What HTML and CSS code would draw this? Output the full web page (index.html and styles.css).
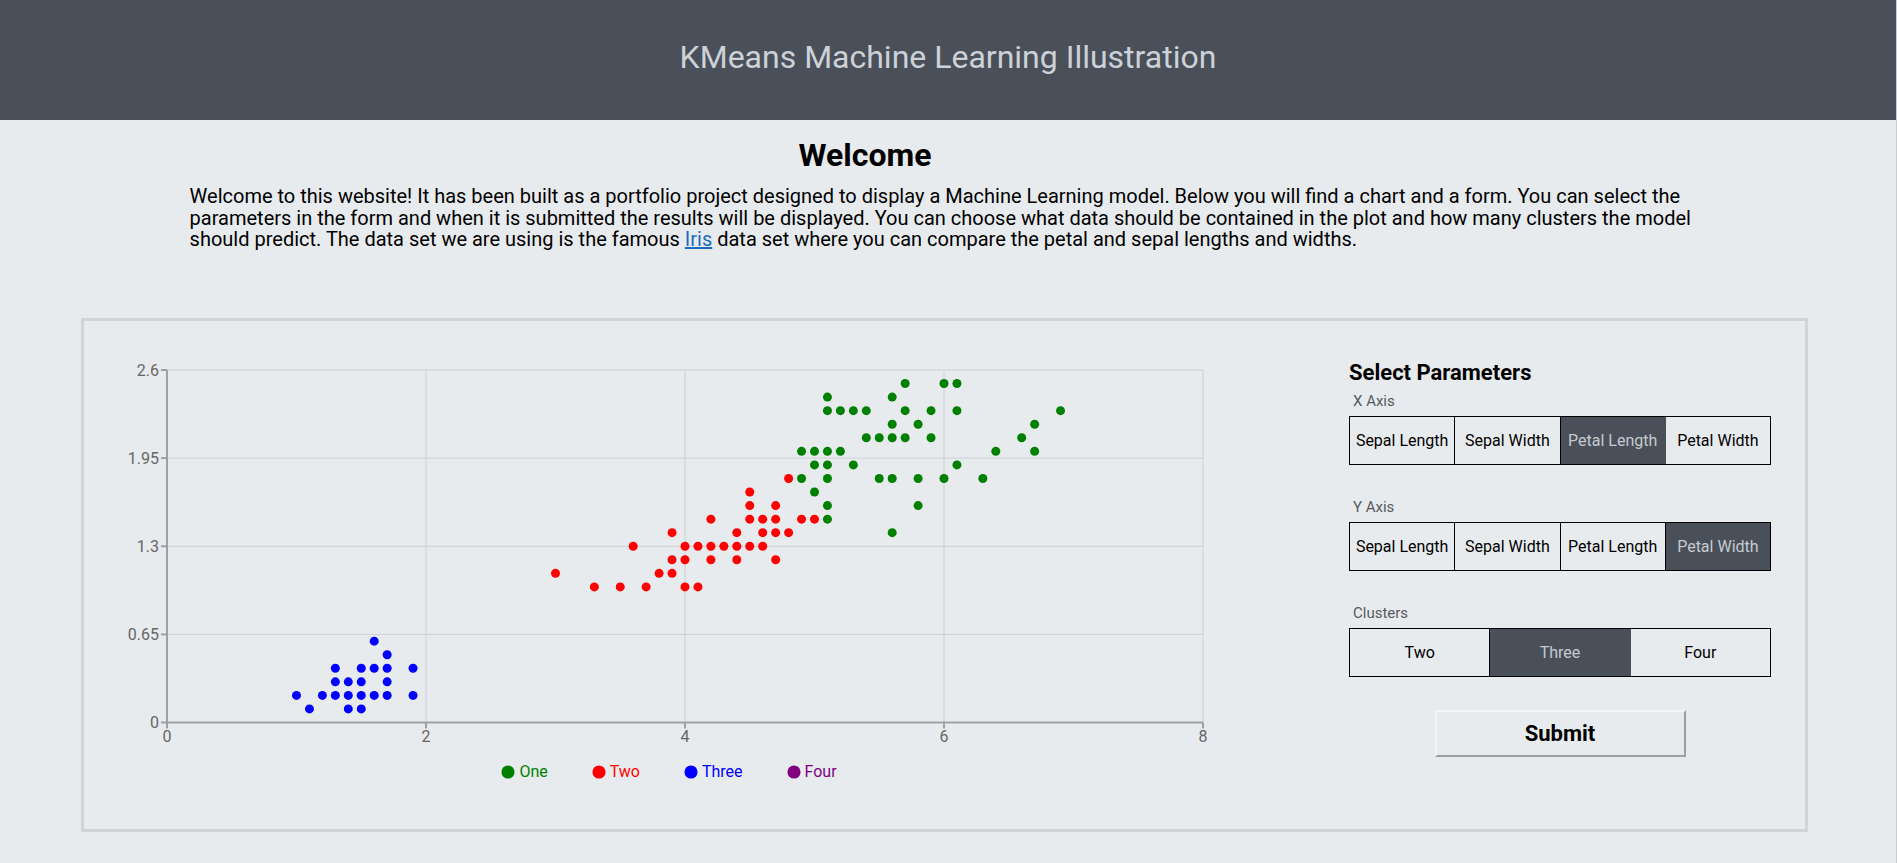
FILE: index.html
```html
<!DOCTYPE html>
<html lang="en">
<head>
<meta charset="utf-8">
<title>KMeans Machine Learning Illustration</title>
<link rel="stylesheet" href="styles.css">
</head>
<body>
<header class="topbar">
  <div class="title">KMeans Machine Learning Illustration</div>
</header>
<section class="intro">
  <h1 class="welcome">Welcome</h1>
  <p class="lead">Welcome to this website! It has been built as a portfolio project designed to display a Machine Learning model. Below you will find a chart and a form. You can select the parameters in the form and when it is submitted the results will be displayed. You can choose what data should be contained in the plot and how many clusters the model should predict. The data set we are using is the famous <a href="#" class="link">Iris</a> data set where you can compare the petal and sepal lengths and widths.</p>
</section>
<main class="panel">
  <div class="chart-col">
    <svg class="chart" width="1170" height="441" viewBox="0 0 1170 441">
      <g class="grid">
        <line x1="83" y1="49" x2="1119" y2="49"/>
        <line x1="83" y1="137.1" x2="1119" y2="137.1"/>
        <line x1="83" y1="225.25" x2="1119" y2="225.25"/>
        <line x1="83" y1="313.4" x2="1119" y2="313.4"/>
        <line x1="342" y1="49" x2="342" y2="401.5"/>
        <line x1="601" y1="49" x2="601" y2="401.5"/>
        <line x1="860" y1="49" x2="860" y2="401.5"/>
        <line x1="1119" y1="49" x2="1119" y2="401.5"/>
      </g>
      <g class="axis">
        <line x1="83" y1="49" x2="83" y2="402.5"/>
        <line x1="82" y1="401.5" x2="1119" y2="401.5"/>
        <line x1="77" y1="49" x2="83" y2="49"/>
        <line x1="77" y1="137.1" x2="83" y2="137.1"/>
        <line x1="77" y1="225.25" x2="83" y2="225.25"/>
        <line x1="77" y1="313.4" x2="83" y2="313.4"/>
        <line x1="77" y1="401.5" x2="83" y2="401.5"/>
        <line x1="83" y1="401.5" x2="83" y2="407.5"/>
        <line x1="342" y1="401.5" x2="342" y2="407.5"/>
        <line x1="601" y1="401.5" x2="601" y2="407.5"/>
        <line x1="860" y1="401.5" x2="860" y2="407.5"/>
        <line x1="1119" y1="401.5" x2="1119" y2="407.5"/>
      </g>
      <g class="tick-y">
        <text x="75" y="54.7">2.6</text>
        <text x="75" y="142.8">1.95</text>
        <text x="75" y="230.9">1.3</text>
        <text x="75" y="319.1">0.65</text>
        <text x="75" y="407.2">0</text>
      </g>
      <g class="tick-x">
        <text x="83" y="420.5">0</text>
        <text x="342" y="420.5">2</text>
        <text x="601" y="420.5">4</text>
        <text x="860" y="420.5">6</text>
        <text x="1119" y="420.5">8</text>
      </g>
      <g class="dots one">
        <circle cx="860" cy="62.55"/><circle cx="743.45" cy="143.9"/><circle cx="847.05" cy="116.78"/>
        <circle cx="808.2" cy="157.46"/><circle cx="834.1" cy="103.22"/><circle cx="937.7" cy="116.78"/>
        <circle cx="898.85" cy="157.46"/><circle cx="834.1" cy="157.46"/><circle cx="872.95" cy="62.55"/>
        <circle cx="743.45" cy="130.34"/><circle cx="769.35" cy="143.9"/><circle cx="795.25" cy="116.78"/>
        <circle cx="730.5" cy="130.34"/><circle cx="743.45" cy="76.11"/><circle cx="769.35" cy="89.67"/>
        <circle cx="795.25" cy="157.46"/><circle cx="950.65" cy="103.22"/><circle cx="976.55" cy="89.67"/>
        <circle cx="821.15" cy="89.67"/><circle cx="717.55" cy="130.34"/><circle cx="950.65" cy="130.34"/>
        <circle cx="717.55" cy="157.46"/><circle cx="821.15" cy="116.78"/><circle cx="860" cy="157.46"/>
        <circle cx="808.2" cy="116.78"/><circle cx="834.1" cy="184.57"/><circle cx="872.95" cy="143.9"/>
        <circle cx="911.8" cy="130.34"/><circle cx="808.2" cy="103.22"/><circle cx="743.45" cy="198.13"/>
        <circle cx="808.2" cy="211.69"/><circle cx="872.95" cy="89.67"/><circle cx="808.2" cy="76.11"/>
        <circle cx="782.3" cy="116.78"/><circle cx="847.05" cy="89.67"/><circle cx="821.15" cy="62.55"/>
        <circle cx="756.4" cy="89.67"/><circle cx="730.5" cy="143.9"/><circle cx="756.4" cy="130.34"/>
        <circle cx="782.3" cy="89.67"/><circle cx="743.45" cy="89.67"/><circle cx="743.45" cy="157.46"/>
        <circle cx="730.5" cy="171.01"/><circle cx="743.45" cy="184.57"/>
      </g>
      <g class="dots two">
        <circle cx="691.65" cy="211.69"/><circle cx="665.75" cy="198.13"/><circle cx="717.55" cy="198.13"/>
        <circle cx="601" cy="225.25"/><circle cx="678.7" cy="198.13"/><circle cx="665.75" cy="225.25"/>
        <circle cx="691.65" cy="184.57"/><circle cx="510.35" cy="265.92"/><circle cx="678.7" cy="225.25"/>
        <circle cx="588.05" cy="211.69"/><circle cx="536.25" cy="265.92"/><circle cx="626.9" cy="198.13"/>
        <circle cx="601" cy="265.92"/><circle cx="549.2" cy="225.25"/><circle cx="652.8" cy="211.69"/>
        <circle cx="613.95" cy="265.92"/><circle cx="588.05" cy="252.36"/><circle cx="704.6" cy="157.46"/>
        <circle cx="691.65" cy="238.8"/><circle cx="639.85" cy="225.25"/><circle cx="704.6" cy="211.69"/>
        <circle cx="575.1" cy="252.36"/><circle cx="562.15" cy="265.92"/><circle cx="588.05" cy="238.8"/>
        <circle cx="665.75" cy="184.57"/><circle cx="691.65" cy="198.13"/><circle cx="652.8" cy="225.25"/>
        <circle cx="613.95" cy="225.25"/><circle cx="652.8" cy="238.8"/><circle cx="678.7" cy="211.69"/>
        <circle cx="601" cy="238.8"/><circle cx="626.9" cy="225.25"/><circle cx="626.9" cy="238.8"/>
        <circle cx="471.5" cy="252.36"/><circle cx="665.75" cy="171.01"/><circle cx="730.5" cy="198.13"/>
      </g>
      <g class="dots three">
        <circle cx="212.5" cy="374.38"/><circle cx="225.45" cy="387.94"/><circle cx="238.4" cy="374.38"/>
        <circle cx="251.35" cy="374.38"/><circle cx="251.35" cy="360.83"/><circle cx="251.35" cy="347.27"/>
        <circle cx="264.3" cy="387.94"/><circle cx="264.3" cy="374.38"/><circle cx="264.3" cy="360.83"/>
        <circle cx="277.25" cy="387.94"/><circle cx="277.25" cy="374.38"/><circle cx="277.25" cy="360.83"/>
        <circle cx="277.25" cy="347.27"/><circle cx="290.2" cy="374.38"/><circle cx="290.2" cy="347.27"/>
        <circle cx="290.2" cy="320.15"/><circle cx="303.15" cy="374.38"/><circle cx="303.15" cy="360.83"/>
        <circle cx="303.15" cy="347.27"/><circle cx="303.15" cy="333.71"/><circle cx="329.05" cy="374.38"/>
        <circle cx="329.05" cy="347.27"/>
      </g>
    </svg>
    <ul class="legend">
      <li class="legend-item c-one"><svg class="legend-icon" viewBox="0 0 32 32"><circle cx="16" cy="16" r="15"/></svg>One</li>
      <li class="legend-item c-two"><svg class="legend-icon" viewBox="0 0 32 32"><circle cx="16" cy="16" r="15"/></svg>Two</li>
      <li class="legend-item c-three"><svg class="legend-icon" viewBox="0 0 32 32"><circle cx="16" cy="16" r="15"/></svg>Three</li>
      <li class="legend-item c-four"><svg class="legend-icon" viewBox="0 0 32 32"><circle cx="16" cy="16" r="15"/></svg>Four</li>
    </ul>
  </div>
  <form class="params" onsubmit="return false">
    <h2 class="params-title">Select Parameters</h2>
    <div class="field">
      <div class="field-label">X Axis</div>
      <div class="seg">
        <button type="button" class="seg-btn">Sepal Length</button>
        <button type="button" class="seg-btn">Sepal Width</button>
        <button type="button" class="seg-btn active">Petal Length</button>
        <button type="button" class="seg-btn">Petal Width</button>
      </div>
    </div>
    <div class="field">
      <div class="field-label">Y Axis</div>
      <div class="seg">
        <button type="button" class="seg-btn">Sepal Length</button>
        <button type="button" class="seg-btn">Sepal Width</button>
        <button type="button" class="seg-btn">Petal Length</button>
        <button type="button" class="seg-btn active">Petal Width</button>
      </div>
    </div>
    <div class="field">
      <div class="field-label">Clusters</div>
      <div class="seg">
        <button type="button" class="seg-btn">Two</button>
        <button type="button" class="seg-btn active">Three</button>
        <button type="button" class="seg-btn">Four</button>
      </div>
    </div>
    <button type="submit" class="submit">Submit</button>
  </form>
</main>
</body>
</html>
```
FILE: styles.css
```css
* { box-sizing: border-box; }

html, body {
  margin: 0;
  padding: 0;
}

body {
  background: #e8ebee;
  font-family: Roboto, "Liberation Sans", Arial, sans-serif;
  color: #000;
  min-height: 863px;
  border-right: 1px solid #c9cdd2;
}

.topbar {
  height: 120px;
  background: #4a5059;
  display: flex;
  align-items: center;
  justify-content: center;
  padding-bottom: 6px;
}

.title {
  color: #cdd2d8;
  font-size: 32px;
  font-weight: 400;
}

.intro {
  padding: 0 10%;
}

.welcome {
  margin: 16px 0 12px;
  padding-right: 166px;
  text-align: center;
  font-size: 32px;
  font-weight: 700;
  line-height: normal;
}

.lead {
  margin: 0;
  font-size: 20px;
  line-height: 21.5px;
}

.link {
  color: #1a6cc2;
  text-decoration: underline;
}

.panel {
  margin: 67px 0 0 81px;
  width: 1727px;
  height: 514px;
  border: 3px solid #d0d4d9;
  display: flex;
  align-items: flex-start;
}

.chart-col {
  width: 1170px;
  flex: none;
}

.chart {
  display: block;
  font-family: Roboto, "Liberation Sans", Arial, sans-serif;
  font-size: 16px;
}

.grid line {
  stroke: #cdd0d4;
  stroke-width: 1;
}

.axis line {
  stroke: #9da1a6;
  stroke-width: 2;
}

.tick-y text {
  fill: #666;
  text-anchor: end;
}

.tick-x text {
  fill: #666;
  text-anchor: middle;
}

.dots circle { r: 4.5px; }
.dots.one { fill: #008000; }
.dots.two { fill: #ff0000; }
.dots.three { fill: #0000ff; }

.legend {
  list-style: none;
  margin: 0;
  padding: 0;
  display: flex;
  justify-content: center;
  gap: 44px;
  font-size: 16px;
  line-height: 20px;
}

.legend-item {
  display: flex;
  align-items: center;
}

.legend-icon {
  width: 14px;
  height: 14px;
  margin-right: 4px;
}

.c-one { color: #008000; fill: #008000; }
.c-two { color: #ff0000; fill: #ff0000; }
.c-three { color: #0000ff; fill: #0000ff; }
.c-four { color: #800080; fill: #800080; }

.params {
  margin-left: 95px;
  width: 422px;
  flex: none;
  padding-top: 39px;
  display: flex;
  flex-direction: column;
}

.params-title {
  margin: 0 0 7px;
  font-size: 22px;
  font-weight: 700;
  line-height: normal;
}

.field {
  display: flex;
  flex-direction: column;
  gap: 6px;
  margin-bottom: 33px;
}

.field-label {
  padding-left: 4px;
  font-size: 15px;
  color: #555a60;
  line-height: normal;
}

.seg {
  display: flex;
  height: 49px;
  border: 1px solid #000;
}

.seg-btn {
  flex: 1 1 0;
  margin: 0;
  padding: 0;
  border: 0;
  border-right: 1px solid #000;
  background: transparent;
  font-family: Roboto, "Liberation Sans", Arial, sans-serif;
  font-size: 16px;
  color: #000;
  cursor: pointer;
}

.seg-btn:last-child {
  border-right: 0;
}

.seg-btn.active {
  background: #4a5059;
  color: #c5cad0;
  border-right-color: #4a5059;
}

.submit {
  align-self: center;
  width: 251px;
  height: 47px;
  margin: 0;
  background: #e8ebee;
  border-style: solid;
  border-width: 2px;
  border-color: #f2f4f6 #9a9ea3 #9a9ea3 #f2f4f6;
  font-family: Roboto, "Liberation Sans", Arial, sans-serif;
  font-size: 22px;
  font-weight: 700;
  color: #000;
  cursor: pointer;
}
```
